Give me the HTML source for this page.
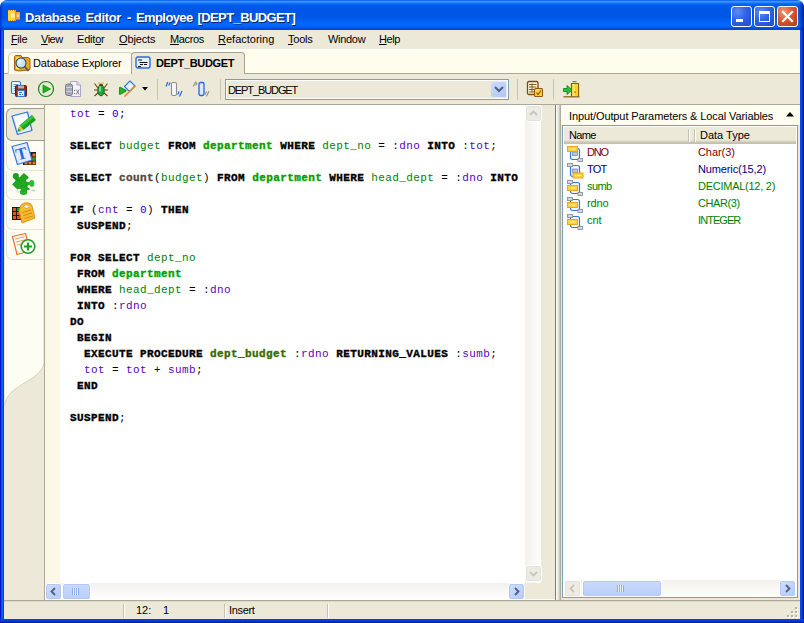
<!DOCTYPE html>
<html>
<head>
<meta charset="utf-8">
<title>Database Editor - Employee [DEPT_BUDGET]</title>
<style>
html,body{margin:0;padding:0;}
body{width:804px;height:623px;overflow:hidden;background:#fff;position:relative;font-family:"Liberation Sans",sans-serif;font-size:11px;color:#000;}
.abs{position:absolute;}
#win{position:absolute;left:0;top:0;width:804px;height:623px;background:#ECE9D8;border-radius:7px 7px 0 0;overflow:hidden;}
#title{position:absolute;left:0;top:0;width:804px;height:30px;
background:linear-gradient(to right,rgba(0,20,170,.55) 0,rgba(0,20,170,0) 3px,rgba(0,20,170,0) 799px,rgba(0,16,140,.35) 801px,rgba(0,10,110,.75) 804px),linear-gradient(to bottom,#0050E0 0px,#2A85FA 1px,#3C95FF 1.500px,#2A85FA 2.500px,#0A6FFF 3.500px,#005FEE 5px,#0056E5 7px,#0056E5 17px,#005FF4 20px,#0068FF 24px,#0066FA 26px,#0052DE 28px,#0044C8 30px);}
#title .txt{position:absolute;left:25px;top:10px;line-height:15px;font-weight:bold;font-size:13px;color:#fff;text-shadow:1px 1px 0 #0A246A;white-space:nowrap;}
#bl{position:absolute;left:0;top:30px;width:4px;height:593px;background:linear-gradient(to right,#0019CF 0,#0019CF 1px,#0A4AE8 1px,#0A4AE8 2px,#1660EE 2px,#1660EE 3px,#0540D8 3px);}
#br{position:absolute;left:800px;top:30px;width:4px;height:593px;background:linear-gradient(to right,#0A48E8 0,#0A48E8 2px,#0030C8 2px,#0030C8 3px,#001890 3px);}
#bb{position:absolute;left:0;top:619px;width:804px;height:4px;background:linear-gradient(to bottom,#0540E0 0,#0540E0 2px,#0030C8 2px,#0030C8 3px,#001EA0 3px);}
.wb{position:absolute;top:6px;width:19px;height:19px;border:1px solid #fff;border-radius:3px;}
.wb.b{background:radial-gradient(circle at 30% 25%,#5C8DF5 0%,#2F62E2 45%,#1F4CCB 100%);}
.wb.r{background:radial-gradient(circle at 30% 25%,#F09A7A 0%,#D9552E 45%,#B83A14 100%);}
#menu{position:absolute;left:4px;top:30px;width:796px;height:19px;background:#ECE9D8;}
#menu span{position:absolute;top:3px;white-space:nowrap;font-size:11px;}
u{text-decoration:underline;}
#tabs{position:absolute;left:4px;top:49px;width:796px;height:24px;background:#FFFDEE;border-bottom:1px solid #ACA899;box-shadow:inset 0 1px 0 #fff;}
#tbar{position:absolute;left:4px;top:74px;width:796px;height:30px;background:#ECE9D8;border-bottom:1px solid #ACA899;}
.sep{position:absolute;top:79px;width:1px;height:21px;background:#C7C4B4;}
#side{position:absolute;left:4px;top:105px;width:40px;height:495px;background:#ECE9D8;border-right:1px solid #ACA899;}
.stab{position:absolute;left:2px;width:37px;height:29px;border:1px solid #E6E2D2;border-right:none;border-top:none;border-radius:0 0 0 7px;}
.stab.act{background:#ECE9D8;border:1px solid #9D9A8B;border-right:none;border-radius:6px 0 0 6px;left:2px;width:37px;}
#ed{position:absolute;left:45px;top:105px;width:480px;height:478px;background:#fff;overflow:hidden;}
#gut{position:absolute;left:0;top:0;width:15px;height:478px;background:#FBF8E8;}
#code{position:absolute;left:25px;top:1px;margin:0;font-family:"Liberation Mono",monospace;font-size:11px;line-height:16px;letter-spacing:0.4px;white-space:pre;color:#000;}
#code b,#code .t,#code .p,#code .c{font-weight:bold;-webkit-text-stroke:0.35px currentColor;}
.v{color:#5A00C0;}
.g{color:#008000;}
.t{color:#00A000;font-weight:bold;}
.p{color:#3A6A00;font-weight:bold;}
.c{color:#5A4A3A;font-weight:bold;}
.n{color:#0000FF;}
.sb{position:absolute;background:linear-gradient(to right,#F3F1EC,#FEFEFB);}
.sbh{position:absolute;background:linear-gradient(to bottom,#F3F1EC,#FEFEFB);}
.btn{position:absolute;width:15px;height:15px;border:1px solid #fff;border-radius:3px;background:linear-gradient(135deg,#CFDDFD,#B5C9F9);box-shadow:inset 0 0 0 1px #B4C8F6;}
.btn.dis{background:#ECEBE4;box-shadow:inset 0 0 0 1px #E3E1D8;}
.thumb{position:absolute;height:15px;border:1px solid #fff;border-radius:3px;background:linear-gradient(to bottom,#CADAFE,#BACDFB);box-shadow:inset 0 0 0 1px #B4C8F6;}
#rp{position:absolute;}
#status{position:absolute;left:4px;top:600px;width:796px;height:19px;background:#ECE9D8;}
#status span{position:absolute;top:4px;font-size:11px;white-space:nowrap;}
.ssep{position:absolute;top:4px;width:1px;height:14px;background:#C5C2B2;box-shadow:1px 0 0 #fff;}
.row{position:absolute;left:0;height:17px;width:232px;font-size:11px;}
.row span{position:absolute;top:1px;white-space:nowrap;}
</style>
</head>
<body>
<div id="win">
 <div id="title">
  <div class="txt"><span style="letter-spacing:-0.35px">Database</span><span style="position:absolute;left:60.500px;letter-spacing:-0.34px">Editor</span><span style="position:absolute;left:102px">-</span><span style="position:absolute;left:111px;letter-spacing:-0.6px">Employee</span><span style="position:absolute;left:172.500px;letter-spacing:-0.6px">[DEPT_BUDGET]</span></div>
  <svg class="abs" style="left:7px;top:9px" width="14" height="13" viewBox="0 0 14 13">
   <rect x="1" y="1" width="8" height="11" fill="#FFD930"/>
   <rect x="9" y="3" width="4" height="7.500" fill="#FAA838"/>
   <path d="M1 1.500H9M1 11.500H9" stroke="#F79028" stroke-width="1" stroke-dasharray="1 1"/>
   <path d="M8.500 1V12" stroke="#F79028" stroke-width="1"/>
   <path d="M9 3.500H13M9 10H13M12.500 3V10.500" stroke="#F79028" stroke-width="1" stroke-dasharray="1 1"/>
   <rect x="4" y="4.500" width="3.500" height="4" fill="#FDEFD0"/>
   <rect x="10" y="5.500" width="2" height="2.500" fill="#FDE6C0"/>
  </svg>
  <div class="wb b" style="left:731px"></div>
  <div class="abs" style="left:736px;top:19px;width:7px;height:3px;background:#fff;"></div>
  <div class="wb b" style="left:754px"></div>
  <div class="abs" style="left:759px;top:11px;width:9px;height:7px;border:1px solid #fff;border-top-width:3px;"></div>
  <div class="wb r" style="left:777px"></div>
  <svg class="abs" style="left:781px;top:10px" width="13" height="13" viewBox="0 0 13 13"><path d="M2 2 L11 11 M11 2 L2 11" stroke="#fff" stroke-width="2.200" stroke-linecap="square"/></svg>
 </div>
 <div id="bl"></div><div id="br"></div>
 <div id="menu">
  <span style="left:7px;letter-spacing:-0.4px"><u>F</u>ile</span>
  <span style="left:37px;letter-spacing:-0.5px"><u>V</u>iew</span>
  <span style="left:73px;letter-spacing:-0.2px">Edit<u>o</u>r</span>
  <span style="left:115px;letter-spacing:-0.13px"><u>O</u>bjects</span>
  <span style="left:166px;letter-spacing:-0.36px"><u>M</u>acros</span>
  <span style="left:214px;letter-spacing:0px"><u>R</u>efactoring</span>
  <span style="left:284px;letter-spacing:-0.24px"><u>T</u>ools</span>
  <span style="left:324px;letter-spacing:-0.3px">Window</span>
  <span style="left:375px;letter-spacing:-0.43px"><u>H</u>elp</span>
 </div>
 <div id="tabs">
  <div class="abs" style="left:4px;top:3px;width:124px;height:21px;border:1px solid #D5D1BF;border-bottom:none;border-radius:5px 5px 0 0;background:#FEFBEE;"></div>
  <div class="abs" style="left:127px;top:3px;width:112px;height:22px;border:1px solid #A5A292;border-bottom:none;border-radius:4px 4px 0 0;background:#ECE9D8;"></div>
  <svg class="abs" style="left:9px;top:5px" width="18" height="18" viewBox="0 0 18 18">
   <path d="M1.5 2.5 L1.5 16 L6.5 17 L15 16 L17 15.5 L17 5 L15 3.5 L9 3.5 L8 1.5 L2.5 1.5 Z" fill="#E9A91E" stroke="#A0600C" stroke-width="1"/>
   <path d="M3 3 L3 15 L6 15.8 L6 3 Z" fill="#FFDF60"/>
   <line x1="11.500" y1="12.500" x2="15.500" y2="17" stroke="#46566A" stroke-width="1.800"/>
   <circle cx="8" cy="9" r="5" fill="#C6E4FB" stroke="#3A4652" stroke-width="1.100"/>
   <circle cx="6.8" cy="7.8" r="2" fill="#E4F3FF"/>
  </svg>
  <span class="abs" style="left:29px;top:8px;font-size:11px;letter-spacing:-0.15px;white-space:nowrap;">Database Explorer</span>
  <svg class="abs" style="left:131px;top:7px" width="16" height="13" viewBox="0 0 16 13">
   <rect x="1" y="1" width="14" height="11" rx="2" fill="#E6EEFC" stroke="#2B6AE0" stroke-width="1.4"/>
   <path d="M3 4 H7 M4.5 6.5 H12.5 M5 8.5 H8 M9 8.5 H12 M3 10.5 H6" stroke="#111" stroke-width="1" fill="none"/>
  </svg>
  <span class="abs" style="left:152px;top:8px;font-size:11px;font-weight:bold;letter-spacing:-0.35px;white-space:nowrap;">DEPT_BUDGET</span>
 </div>
 <div id="tbar">
  <!-- save icon : page x=11..27 => local 7..23 ; y=80..97 => local 6..23 -->
  <svg class="abs" style="left:6px;top:6px" width="18" height="18" viewBox="0 0 18 18">
   <rect x="1.5" y="1.5" width="9" height="12" rx="1.5" fill="#F4F9FF" stroke="#2F78E4" stroke-width="1.2"/>
   <path d="M3.5 4.5H8.5M3.5 6.5H8.5M3.5 8.5H6M3.5 10.5H6" stroke="#5B9BEF" stroke-width="1"/>
   <rect x="5.5" y="5.5" width="11" height="11" rx="1" fill="#8E2A12" stroke="#6A1A08" stroke-width="1"/>
   <rect x="8" y="5.5" width="6" height="3" fill="#B9B2AA"/>
   <rect x="7.5" y="10.5" width="7" height="6" fill="#DCEBFF" stroke="#2F78E4" stroke-width="1"/>
   <path d="M9 12.5H12M9 14.5H11M12 14.5H13" stroke="#2F78E4" stroke-width="1"/>
  </svg>
  <!-- run -->
  <svg class="abs" style="left:33px;top:6px" width="18" height="18" viewBox="0 0 18 18">
   <circle cx="9" cy="9" r="7.5" fill="none" stroke="#128A12" stroke-width="1.2"/>
   <path d="M6 5 L6 13 L13.5 9 Z" fill="#22B022" stroke="#108A10" stroke-width="0.8" stroke-linejoin="round"/>
  </svg>
  <!-- db doc -->
  <svg class="abs" style="left:60px;top:6px" width="18" height="18" viewBox="0 0 18 18">
   <path d="M6.5 1.5 H13 L16.5 5 V16.5 H6.5 Z" fill="#F2F2F8" stroke="#A9A9C4" stroke-width="1"/>
   <path d="M13 1.5 V5 H16.5" fill="#DCDCEA" stroke="#A9A9C4" stroke-width="1"/>
   <rect x="1.5" y="4" width="7" height="11.5" rx="2.2" fill="#A7A9B8" stroke="#77798C" stroke-width="1"/>
   <path d="M2 7.5H8M2 11.5H8" stroke="#D0D2DC" stroke-width="1"/>
   <path d="M10 10.5h1M10 13.5h1" stroke="#666" stroke-width="1.2"/>
   <path d="M12.2 9.5 L15.2 14.5 M15.2 9.5 L12.2 14.5" stroke="#777" stroke-width="0.9"/>
  </svg>
  <!-- bug -->
  <svg class="abs" style="left:88px;top:6px" width="18" height="18" viewBox="0 0 18 18">
   <path d="M2.5 3.5 L6 8 M15.5 3.5 L12 8 M2 10 H6 M16 10 H12 M2.5 16 L6.5 12.5 M15.5 16 L11.5 12.5" stroke="#7A3A0A" stroke-width="1.1" fill="none"/>
   <path d="M7 2 V4 M11 2 V4" stroke="#E8C020" stroke-width="1.2"/>
   <ellipse cx="9" cy="5.2" rx="2" ry="1.6" fill="#7A3A0A"/>
   <ellipse cx="9" cy="10.5" rx="3.3" ry="5.3" fill="#1FA83A" stroke="#0B6A1C" stroke-width="1"/>
   <ellipse cx="8" cy="9" rx="1.1" ry="3" fill="#7BE08A"/>
  </svg>
  <!-- run to flag -->
  <svg class="abs" style="left:114px;top:5px" width="20" height="20" viewBox="0 0 20 20">
   <path d="M6.500 7.500 L12 2 L17 7 L11.500 12.500 Z" fill="#EAF2FF" stroke="#2F78E4" stroke-width="1.100" stroke-linejoin="round"/>
   <path d="M6.500 17.500 L17.300 6.700" stroke="#E8821A" stroke-width="1.500"/>
   <path d="M1.600 8.800 Q1.200 8 2.200 8.200 L8 11.300 Q8.800 11.800 8 12.300 L2.200 15.400 Q1.300 15.700 1.400 14.800 Z" fill="#25B425" stroke="#128A12" stroke-width="0.900" stroke-linejoin="round"/>
  </svg>
  <svg class="abs" style="left:138px;top:13px" width="6" height="4" viewBox="0 0 6 4"><path d="M0 0H6L3 3.5Z" fill="#000"/></svg>
  <!-- icon 6 -->
  <svg class="abs" style="left:161px;top:6px" width="18" height="18" viewBox="0 0 18 18">
   <rect x="6.5" y="2.5" width="5" height="13" rx="1.5" fill="#F6F6F6" stroke="#8E8E8E" stroke-width="1.1"/>
   <path d="M1 6.500 L2.800 2 M3.800 5.500 L5 2.500 M12.800 14.500 L14 11.500 M14.500 16.500 L17 11" stroke="#1F6AE0" stroke-width="1.200"/>
  </svg>
  <svg class="abs" style="left:188px;top:6px" width="18" height="18" viewBox="0 0 18 18">
   <rect x="7" y="2.5" width="5" height="13" rx="1.5" fill="#DCE9FF" stroke="#1F6AE0" stroke-width="1.3"/>
   <path d="M1.200 6.500 L3.800 1.500 M3.800 5.500 L5 2.500 M13.200 14.500 L14.500 11.500 M14.500 16.500 L17 11" stroke="#8E8E8E" stroke-width="1.100"/>
  </svg>
  <!-- combobox -->
  <div class="abs" style="left:221px;top:5px;width:282px;height:19px;border:1px solid #7F9DB9;background:#ECE9D8;box-shadow:inset 0 0 0 1px #fff;"></div>
  <span class="abs" style="left:224px;top:10px;font-size:11px;letter-spacing:-1.1px;white-space:nowrap;">DEPT_BUDGET</span>
  <div class="abs" style="left:487px;top:8px;width:15px;height:15px;border-radius:2px;background:linear-gradient(135deg,#CBDCFE,#B0C6F8);"></div>
  <svg class="abs" style="left:490px;top:12px" width="10" height="7" viewBox="0 0 10 7"><path d="M1 1 L5 5 L9 1" fill="none" stroke="#4D6185" stroke-width="2"/></svg>
  <!-- doc check -->
  <svg class="abs" style="left:522px;top:6px" width="18" height="18" viewBox="0 0 18 18">
   <rect x="1.5" y="1.5" width="10.5" height="13" rx="1.5" fill="#FFF6D8" stroke="#7A4A10" stroke-width="1.3"/>
   <path d="M3 4.5H10.5M3 7H10.5M3 9.5H10.5M3 12H8M6 3.5V12" stroke="#7A4A10" stroke-width="0.9"/>
   <rect x="8.5" y="8.5" width="8" height="8" rx="1" fill="#FFD23A" stroke="#8A5A10" stroke-width="1.1"/>
   <path d="M10.5 12.5 L12 14.5 L15 10.5" fill="none" stroke="#7A4A10" stroke-width="1.1"/>
  </svg>
  <!-- exit -->
  <svg class="abs" style="left:558px;top:5px" width="18" height="19" viewBox="0 0 18 19">
   <rect x="10.5" y="2" width="4" height="1.2" fill="#22B022"/>
   <path d="M9.5 17.5 V4.5 H16.5 V17.5" fill="#FFE45A" stroke="#8A5A10" stroke-width="1.2"/>
   <rect x="13" y="5" width="3" height="12" fill="#FFD020"/>
   <path d="M1.5 17.8 H17.5" stroke="#8A5A10" stroke-width="1.2"/>
   <rect x="12.5" y="12.5" width="1" height="1.2" fill="#5A3A08"/>
   <path d="M1.5 9.5 H5 V6.5 L10 11 L5 15.5 V12.5 H1.5 Z" fill="#2DBE3A" stroke="#0E8A1E" stroke-width="0.9" stroke-linejoin="round"/>
  </svg>
 </div>
 <div class="sep" style="left:157px"></div><div class="sep" style="left:220px"></div><div class="sep" style="left:517px"></div><div class="sep" style="left:553px"></div>
 <div id="side">
  <svg class="abs" style="left:0;top:0" width="40" height="310" viewBox="0 0 40 310"><path d="M0 0 H40 V259 C37 268 30 272 22 277 C12 283 3 288 0.500 300 L0 300 Z" fill="#FEFDF3" stroke="#CFCCBC" stroke-width="0.800"/><rect x="0" y="0" width="40" height="2" fill="#FEFDF3"/></svg>
  <div class="stab act" style="top:3px;height:31px;"></div>
  <div class="stab" style="top:36px;height:29px;"></div>
  <div class="stab" style="top:66px;height:28px;"></div>
  <div class="stab" style="top:95px;height:29px;"></div>
  <div class="stab" style="top:125px;height:29px;"></div>
  <!-- pencil page : page coords origin (4,105) -->
  <svg class="abs" style="left:6px;top:5px" width="30" height="28" viewBox="0 0 30 28">
   <path d="M2 6 L17.5 2 L22 20.5 L7.5 24.5 Z" fill="#E4ECFB" stroke="#2F78E4" stroke-width="1.2" stroke-linejoin="round"/>
   <path d="M4 7 L16 4 L18 12 L7 17 Z" fill="#F7FAFF"/>
   <path d="M22 5 L26 10 L13.5 20 L9.5 15.5 Z" fill="#1E9E1E"/>
   <path d="M22 5 L24 7.5 L11.5 17.8 L9.5 15.5 Z" fill="#35C235"/>
   <path d="M9.5 15.5 L13.5 20 L11 21 L8.5 18 Z" fill="#F2C028"/>
   <path d="M8.5 18 L11 21 L7.5 21.8 Z" fill="#1E9E1E"/>
  </svg>
  <!-- T page -->
  <svg class="abs" style="left:6px;top:36px" width="30" height="28" viewBox="0 0 30 28">
   <rect x="13" y="11" width="13" height="13" fill="#1A1A1A"/>
   <path d="M22.500 12.500h3v3h-3zM22.500 16.500h3v3h-3zM22.500 20.500h3v3h-3zM18.500 20.500h3v3h-3zM14.500 20.500h3v3h-3z" fill="#F07818"/>
   <rect x="22.500" y="16.500" width="3" height="3" fill="#18A018"/>
   <path d="M2 5.500 L17 1.500 L22 19 L7.500 23.500 Z" fill="#E4ECFB" stroke="#2F78E4" stroke-width="1.200" stroke-linejoin="round"/>
   <text x="0" y="0" transform="translate(7.500,19.500) rotate(-15)" font-family="Liberation Serif,serif" font-weight="bold" font-size="17" fill="#1F6AE0">T</text>
  </svg>
  <!-- puzzle -->
  <svg class="abs" style="left:7px;top:66px" width="28" height="26" viewBox="0 0 28 26">
   <ellipse cx="22.500" cy="19.600" rx="2.200" ry="1" fill="#C9D8CC"/>
   <ellipse cx="9" cy="20.500" rx="4" ry="1.200" fill="#DCE6E0"/>
   <path d="M12.900 2.100 L17.800 6.200 L16 8.800 L17.800 11.500 L18 14.500 L18.600 19 L14 18.800 L9 18.300 L6.500 18.600 L1.100 13.400 L4.700 9.600 L8 6.500 Z" fill="#1FA51F"/>
   <circle cx="4.900" cy="5.200" r="3.100" fill="#1CA01C"/>
   <path d="M3 7 L8 6 L9 10 L5 10 Z" fill="#1CA01C"/>
   <ellipse cx="20.800" cy="12.400" rx="2.600" ry="3.400" fill="#2DBE3A"/>
   <path d="M17 11 L20 11.500 L20 13.500 L17 14 Z" fill="#27B42F"/>
   <ellipse cx="12.600" cy="21" rx="3.800" ry="2.900" fill="#25B32B"/>
   <path d="M10 17 L16 17 L15.500 21 L9.500 21 Z" fill="#22AC26"/>
   <circle cx="16.600" cy="9.600" r="1.500" fill="#FEFDF3"/>
   <circle cx="17.900" cy="15.600" r="1.400" fill="#FEFDF3"/>
   <circle cx="8.300" cy="19" r="1.300" fill="#FEFDF3"/>
   <circle cx="8.600" cy="5.300" r="1" fill="#FEFDF3"/>
  </svg>
  <!-- grid + tag -->
  <svg class="abs" style="left:7px;top:97px" width="26" height="24" viewBox="0 0 26 24">
   <rect x="1" y="5" width="13" height="13" fill="#1A1A1A"/>
   <path d="M2 6h3v3h-3zM2 10h3v3h-3zM2 14h3v3h-3zM6 14h3v3h-3zM6 10h3v3h-3z" fill="#E05A10"/>
   <rect x="6" y="6" width="3" height="3" fill="#18A018"/>
   <path d="M9 6 C9 0 20 -1 21 4 L24 16 L11 21 L8 9 Z" fill="#F8BA34" stroke="#D89418" stroke-width="1" stroke-linejoin="round"/>
   <ellipse cx="15.500" cy="4.500" rx="2.600" ry="1.600" fill="#FFFDF0" stroke="#D89418" stroke-width="0.600"/>
   <path d="M11.500 10.500 L20 8 M12.500 13.500 L21 11 M13.500 16.500 L22 14" stroke="#C98410" stroke-width="0.900"/>
  </svg>
  <!-- page plus -->
  <svg class="abs" style="left:7px;top:127px" width="26" height="26" viewBox="0 0 26 26">
   <path d="M1.500 4.500 L14.500 1.500 L19 19 L6 22.500 Z" fill="#FFF8F2" stroke="#E8702A" stroke-width="1.200" stroke-linejoin="round"/>
   <path d="M4 7 L13.500 4.800 M5 10 L14.500 7.800 M6 13 L10 12" stroke="#F0A070" stroke-width="1"/>
   <circle cx="17" cy="14.500" r="6.800" fill="#fff" stroke="#1E9E1E" stroke-width="1.600"/>
   <path d="M17 10.500 V18.500 M13 14.500 H21" stroke="#1E9E1E" stroke-width="2.200"/>
  </svg>
 </div>
 <div id="ed">
  <div id="gut"></div>
<pre id="code"><span class="v">tot</span> = <span class="n">0</span>;

<b>SELECT</b> <span class="g">budget</span> <b>FROM</b> <span class="t">department</span> <b>WHERE</b> <span class="g">dept_no</span> = :<span class="v">dno</span> <b>INTO</b> :<span class="v">tot</span>;

<b>SELECT</b> <span class="c">count</span>(<span class="g">budget</span>) <b>FROM</b> <span class="t">department</span> <b>WHERE</b> <span class="g">head_dept</span> = :<span class="v">dno</span> <b>INTO</b>

<b>IF</b> (<span class="v">cnt</span> = <span class="n">0</span>) <b>THEN</b>
 <b>SUSPEND</b>;

<b>FOR SELECT</b> <span class="g">dept_no</span>
 <b>FROM</b> <span class="t">department</span>
 <b>WHERE</b> <span class="g">head_dept</span> = :<span class="v">dno</span>
 <b>INTO</b> :<span class="v">rdno</span>
<b>DO</b>
 <b>BEGIN</b>
  <b>EXECUTE PROCEDURE</b> <span class="p">dept_budget</span> :<span class="v">rdno</span> <b>RETURNING_VALUES</b> :<span class="v">sumb</span>;
  <span class="v">tot</span> = <span class="v">tot</span> + <span class="v">sumb</span>;
 <b>END</b>

<b>SUSPEND</b>;</pre>
 </div>
<div class="sb" style="left:525px;top:105px;width:16px;height:478px;"></div>
 <div class="btn dis" style="left:525px;top:105px;"></div>
 <svg class="abs" style="left:529px;top:110px" width="9" height="6" viewBox="0 0 9 6"><path d="M1 5 L4.500 1.500 L8 5" fill="none" stroke="#C9C7BA" stroke-width="1.800"/></svg>
 <div class="btn dis" style="left:525px;top:565px;"></div>
 <svg class="abs" style="left:529px;top:571px" width="9" height="6" viewBox="0 0 9 6"><path d="M1 1 L4.500 4.500 L8 1" fill="none" stroke="#C9C7BA" stroke-width="1.800"/></svg>
 <div class="sbh" style="left:45px;top:583px;width:480px;height:16px;"></div>
 <div class="btn" style="left:45px;top:583px;"></div>
 <svg class="abs" style="left:50px;top:587px" width="6" height="9" viewBox="0 0 6 9"><path d="M5 1 L1.500 4.500 L5 8" fill="none" stroke="#4D6185" stroke-width="1.800"/></svg>
 <div class="thumb" style="left:62px;top:583px;width:27px;"></div>
 <div class="abs" style="left:72px;top:588px;width:7px;height:7px;background:repeating-linear-gradient(to right,#8EA7E8 0,#8EA7E8 1px,#EEF3FE 1px,#EEF3FE 2px);"></div>
 <div class="btn" style="left:508px;top:583px;"></div>
 <svg class="abs" style="left:514px;top:587px" width="6" height="9" viewBox="0 0 6 9"><path d="M1 1 L4.500 4.500 L1 8" fill="none" stroke="#4D6185" stroke-width="1.800"/></svg>
 <div class="abs" style="left:45px;top:599px;width:511px;height:1px;background:#fff;"></div>
<div class="abs" style="left:555px;top:105px;width:1px;height:495px;background:#7D7A6E;"></div>
 <div class="abs" style="left:556px;top:105px;width:1px;height:495px;background:#fff;"></div>
 <div class="abs" style="left:557px;top:105px;width:3px;height:495px;background:linear-gradient(to right,#F2F1EC,#E2E0D5 50%,#C2BFAF);"></div>
 <div class="abs" style="left:560px;top:105px;width:1px;height:495px;background:#B0AD9D;"></div>
 <div id="rp" style="left:561px;top:105px;width:239px;height:495px;background:#ECE9D8;">
  <div class="abs" style="left:0;top:0;width:239px;height:20px;background:#FFFCF0;"></div>
  <span class="abs" style="left:8px;top:5px;font-size:11px;letter-spacing:-0.1px;white-space:nowrap;">Input/Output Parameters &amp; Local Variables</span>
  <svg class="abs" style="left:225px;top:7px" width="8" height="5" viewBox="0 0 8 5"><path d="M0 4.500 L4 0 L8 4.500 Z" fill="#000"/></svg>
  <div class="abs" id="lv" style="left:1px;top:20px;width:234px;height:471px;border:1px solid #7F9DB9;background:#fff;">
   <div class="abs" style="left:1px;top:1px;width:232px;height:17px;background:linear-gradient(to bottom,#ECE9D8 0,#ECE9D8 13px,#DEDBCA 14px,#CFCBBA 15px,#C4C0AE 16px,#C4C0AE 17px);"></div>
   <span class="abs" style="left:6px;top:3px;font-size:11px;letter-spacing:-0.66px;white-space:nowrap;">Name</span>
   <span class="abs" style="left:137px;top:3px;font-size:11px;white-space:nowrap;">Data Type</span>
   <div class="abs" style="left:125px;top:3px;width:1px;height:13px;background:#C5C2B2;box-shadow:1px 0 0 #fff;"></div>
   <div class="abs" style="left:131px;top:3px;width:1px;height:13px;background:#C5C2B2;box-shadow:1px 0 0 #fff;"></div>
<div class="row" style="top:19px;color:#800000"><svg class="abs" style="left:3px;top:-0.500px" width="18" height="18" viewBox="0 0 18 18"><rect x="4.5" y="3.500" width="9" height="11" rx="2" fill="#F4F8FF" stroke="#2F78E4" stroke-width="1.200"/><rect x="6.500" y="7" width="5" height="3.500" fill="#B8C4D6" stroke="#7D8EA8" stroke-width="0.800"/><rect x="12" y="13.500" width="4.500" height="3" fill="#D5D9DF" stroke="#8A919C" stroke-width="0.900"/><rect x="1.5" y="1.5" width="10" height="5" fill="#FFD23A" stroke="#E8A81A" stroke-width="1"/><path d="M3.5 4.0h1M5.5 4.0h4" stroke="#FFF3B0" stroke-width="1"/></svg><span style="left:24px;letter-spacing:-1.15px">DNO</span><span style="left:135px;letter-spacing:-0.07px">Char(3)</span></div>
<div class="row" style="top:36px;color:#000080"><svg class="abs" style="left:3px;top:-0.500px" width="18" height="18" viewBox="0 0 18 18"><rect x="4.5" y="3.500" width="9" height="11" rx="2" fill="#F4F8FF" stroke="#2F78E4" stroke-width="1.200"/><rect x="6.500" y="7" width="5" height="3.500" fill="#B8C4D6" stroke="#7D8EA8" stroke-width="0.800"/><rect x="1.500" y="1.500" width="5" height="3" fill="#D5D9DF" stroke="#8A919C" stroke-width="0.900"/><rect x="7" y="11" width="10" height="5" fill="#FFD23A" stroke="#E8A81A" stroke-width="1"/><path d="M9 13.500h1M11 13.500h4" stroke="#FFF3B0" stroke-width="1"/></svg><span style="left:24px;letter-spacing:-0.83px">TOT</span><span style="left:135px;letter-spacing:-0.13px">Numeric(15,2)</span></div>
<div class="row" style="top:53px;color:#008000"><svg class="abs" style="left:3px;top:-0.500px" width="18" height="18" viewBox="0 0 18 18"><rect x="4.5" y="3.500" width="9" height="11" rx="2" fill="#F4F8FF" stroke="#2F78E4" stroke-width="1.200"/><rect x="6.500" y="7" width="5" height="3.500" fill="#B8C4D6" stroke="#7D8EA8" stroke-width="0.800"/><rect x="1.500" y="1.500" width="5" height="3" fill="#D5D9DF" stroke="#8A919C" stroke-width="0.900"/><rect x="12" y="13.500" width="4.500" height="3" fill="#D5D9DF" stroke="#8A919C" stroke-width="0.900"/><rect x="1.5" y="6.5" width="10" height="5" fill="#FFD23A" stroke="#E8A81A" stroke-width="1"/><path d="M3.5 9.0h1M5.5 9.0h4" stroke="#FFF3B0" stroke-width="1"/></svg><span style="left:24px;letter-spacing:-0.57px">sumb</span><span style="left:135px;letter-spacing:-0.26px">DECIMAL(12, 2)</span></div>
<div class="row" style="top:70px;color:#008000"><svg class="abs" style="left:3px;top:-0.500px" width="18" height="18" viewBox="0 0 18 18"><rect x="4.5" y="3.500" width="9" height="11" rx="2" fill="#F4F8FF" stroke="#2F78E4" stroke-width="1.200"/><rect x="6.500" y="7" width="5" height="3.500" fill="#B8C4D6" stroke="#7D8EA8" stroke-width="0.800"/><rect x="1.500" y="1.500" width="5" height="3" fill="#D5D9DF" stroke="#8A919C" stroke-width="0.900"/><rect x="12" y="13.500" width="4.500" height="3" fill="#D5D9DF" stroke="#8A919C" stroke-width="0.900"/><rect x="1.5" y="6.5" width="10" height="5" fill="#FFD23A" stroke="#E8A81A" stroke-width="1"/><path d="M3.5 9.0h1M5.5 9.0h4" stroke="#FFF3B0" stroke-width="1"/></svg><span style="left:24px;letter-spacing:-0.16px">rdno</span><span style="left:135px;letter-spacing:-0.41px">CHAR(3)</span></div>
<div class="row" style="top:87px;color:#008000"><svg class="abs" style="left:3px;top:-0.500px" width="18" height="18" viewBox="0 0 18 18"><rect x="4.5" y="3.500" width="9" height="11" rx="2" fill="#F4F8FF" stroke="#2F78E4" stroke-width="1.200"/><rect x="6.500" y="7" width="5" height="3.500" fill="#B8C4D6" stroke="#7D8EA8" stroke-width="0.800"/><rect x="1.500" y="1.500" width="5" height="3" fill="#D5D9DF" stroke="#8A919C" stroke-width="0.900"/><rect x="12" y="13.500" width="4.500" height="3" fill="#D5D9DF" stroke="#8A919C" stroke-width="0.900"/><rect x="1.5" y="6.5" width="10" height="5" fill="#FFD23A" stroke="#E8A81A" stroke-width="1"/><path d="M3.5 9.0h1M5.5 9.0h4" stroke="#FFF3B0" stroke-width="1"/></svg><span style="left:24px;letter-spacing:-0.1px">cnt</span><span style="left:135px;letter-spacing:-0.93px">INTEGER</span></div>

   <div class="sbh" style="left:1px;top:454px;width:232px;height:16px;"></div>
   <div class="btn dis" style="left:1px;top:454px;"></div>
   <svg class="abs" style="left:6px;top:458px" width="6" height="9" viewBox="0 0 6 9"><path d="M5 1 L1.500 4.500 L5 8" fill="none" stroke="#C9C7BA" stroke-width="1.800"/></svg>
   <div class="thumb" style="left:19px;top:454px;width:78px;"></div>
   <div class="abs" style="left:54px;top:459px;width:7px;height:7px;background:repeating-linear-gradient(to right,#8EA7E8 0,#8EA7E8 1px,#EEF3FE 1px,#EEF3FE 2px);"></div>
   <div class="btn" style="left:216px;top:454px;"></div>
   <svg class="abs" style="left:222px;top:458px" width="6" height="9" viewBox="0 0 6 9"><path d="M1 1 L4.500 4.500 L1 8" fill="none" stroke="#4D6185" stroke-width="1.800"/></svg>
  </div>
 </div>

 <div id="status">
  <div class="abs" style="left:0;top:0;width:796px;height:1px;background:#ACA899;"></div>
  <div class="abs" style="left:0;top:1px;width:796px;height:1px;background:#DDDACB;"></div>
  <svg class="abs" style="left:783px;top:6px" width="12" height="12" viewBox="0 0 12 12">
   <g fill="#fff"><rect x="9" y="2" width="2" height="2"/><rect x="5" y="6" width="2" height="2"/><rect x="9" y="6" width="2" height="2"/><rect x="1" y="10" width="2" height="2"/><rect x="5" y="10" width="2" height="2"/><rect x="9" y="10" width="2" height="2"/></g>
   <g fill="#B8B4A2"><rect x="8" y="1" width="2" height="2"/><rect x="4" y="5" width="2" height="2"/><rect x="8" y="5" width="2" height="2"/><rect x="0" y="9" width="2" height="2"/><rect x="4" y="9" width="2" height="2"/><rect x="8" y="9" width="2" height="2"/></g>
  </svg>
  <span style="left:132px">12:</span><span style="left:159px">1</span>
  <span style="left:225px;letter-spacing:-0.33px">Insert</span>
  <div class="ssep" style="left:119px"></div>
  <div class="ssep" style="left:220px"></div>
  <div class="ssep" style="left:323px"></div>
 </div>
 <div id="bb"></div>
</div>
</body>
</html>
